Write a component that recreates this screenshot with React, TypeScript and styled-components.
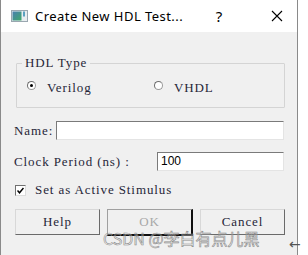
import React from "react";
import styled, { createGlobalStyle } from "styled-components";

const GlobalStyle = createGlobalStyle`
  html, body {
    margin: 0;
    padding: 0;
    background: #ffffff;
  }
  body {
    width: 308px;
    height: 255px;
    overflow: hidden;
  }
`;

const Page = styled.div`
  position: relative;
  width: 308px;
  height: 255px;
  background: #ffffff;
`;

const Window = styled.div`
  width: 296px;
  height: 255px;
  border-left: 1px solid #8a8a8a;
  border-right: 1px solid #8a8a8a;
  display: flex;
  flex-direction: column;
  box-sizing: content-box;
`;

const TitleBar = styled.div`
  height: 32px;
  background: #ffffff;
  display: flex;
  align-items: center;
  padding-left: 10px;
  font-family: "Noto Sans", "Liberation Sans", sans-serif;
  font-size: 13px;
  color: #000;
`;

const Title = styled.span`
  margin-left: 7px;
  width: 169px;
  white-space: nowrap;
  letter-spacing: 0.45px;
`;

const TitleButton = styled.span<{ $gap: number }>`
  width: 30px;
  margin-left: ${(p) => p.$gap}px;
  display: flex;
  justify-content: center;
  font-size: 15px;
`;

const Body = styled.div`
  flex: 1;
  background: #f0f0f0;
  padding: 0 12px 0 13px;
  font-family: "Liberation Serif", "DejaVu Serif", serif;
  font-size: 13px;
  letter-spacing: 0.9px;
  color: #262638;
`;

const GroupBox = styled.div`
  position: relative;
  margin: 31px 0 0 2px;
  height: 43px;
  border: 1px solid #d4d4d4;
  border-radius: 1px;
  display: flex;
  align-items: center;
  padding-left: 10px;
`;

const Legend = styled.span`
  position: absolute;
  top: -9px;
  left: 5px;
  padding: 0 3px;
  background: #f0f0f0;
`;

const RadioItem = styled.label<{ $w: number }>`
  display: flex;
  align-items: center;
  width: ${(p) => p.$w}px;
  margin-top: 4px;
`;

const RadioDot = styled.span<{ $on: boolean }>`
  width: 7px;
  height: 7px;
  border-radius: 50%;
  border: 1px solid #9a9a9a;
  border-top-color: #6e6e6e;
  border-left-color: #6e6e6e;
  background: #ffffff;
  margin: -5px 11px 0 0;
  display: flex;
  align-items: center;
  justify-content: center;
  &::after {
    content: "";
    width: 3px;
    height: 3px;
    border-radius: 50%;
    background: ${(p) => (p.$on ? "#000" : "transparent")};
  }
`;

const FieldRow = styled.div<{ $top: number }>`
  display: flex;
  align-items: center;
  margin-top: ${(p) => p.$top}px;
  height: 19px;
`;

const Label = styled.span<{ $w: number }>`
  width: ${(p) => p.$w}px;
  white-space: nowrap;
`;

const TextInput = styled.div`
  flex: 1;
  margin-right: 1px;
  height: 17px;
  background: #ffffff;
  border-top: 1px solid #7a7a7a;
  border-left: 1px solid #7a7a7a;
  border-right: 1px solid #e4e4e4;
  border-bottom: 1px solid #e4e4e4;
  font-family: "Liberation Sans", sans-serif;
  font-size: 12px;
  letter-spacing: 0;
  color: #000;
  line-height: 17px;
  padding-left: 3px;
`;

const CheckRow = styled.div`
  display: flex;
  align-items: center;
  margin-top: 11px;
  padding-left: 1px;
`;

const CheckBox = styled.span`
  width: 9px;
  height: 9px;
  background: #fff;
  border-top: 1px solid #707070;
  border-left: 1px solid #707070;
  border-right: 1px solid #dcdcdc;
  border-bottom: 1px solid #dcdcdc;
  margin-right: 9px;
  display: flex;
  align-items: center;
  justify-content: center;
`;

const ButtonRow = styled.div`
  display: flex;
  gap: 7px;
  margin-top: 11px;
  padding-left: 1px;
`;

const Button = styled.div<{ $default?: boolean; $disabled?: boolean }>`
  width: 84px;
  height: 24px;
  display: flex;
  align-items: center;
  justify-content: center;
  background: #f0f0f0;
  border-top: 1px solid ${(p) => (p.$default ? "#a0a0a0" : "#d8d8d8")};
  border-left: 1px solid ${(p) => (p.$default ? "#a0a0a0" : "#d8d8d8")};
  border-right: ${(p) => (p.$default ? "2px solid #101010" : "1px solid #6a6a6a")};
  border-bottom: ${(p) => (p.$default ? "2px solid #101010" : "1px solid #6a6a6a")};
  color: ${(p) => (p.$disabled ? "#a8a8a8" : "#262638")};
`;

const Watermark = styled.div`
  position: absolute;
  left: 103px;
  top: 226px;
  font-family: "Noto Sans CJK SC", "Noto Sans", sans-serif;
  font-size: 16px;
  color: rgba(240, 240, 240, 0.2);
  -webkit-text-stroke: 0.6px #8c8c8c;
  white-space: nowrap;
`;

const Arrow = styled.div`
  position: absolute;
  left: 289px;
  top: 236px;
  font-family: "DejaVu Sans", sans-serif;
  font-size: 14px;
  color: #555;
`;

const AppIcon = () => (
  <svg width="17" height="12" viewBox="0 0 17 12">
    <defs>
      <linearGradient id="ig" x1="0" y1="0" x2="1" y2="1">
        <stop offset="0" stopColor="#4a7fb0" />
        <stop offset="1" stopColor="#3fa86a" />
      </linearGradient>
    </defs>
    <rect x="0.5" y="0.5" width="16" height="11" fill="#e8edf0" stroke="#9aa7b0" />
    <rect x="1.5" y="1.5" width="9" height="9" fill="url(#ig)" />
    <rect x="12" y="1.5" width="2" height="5" fill="#5aa0c0" />
  </svg>
);

const CloseIcon = () => (
  <svg width="12" height="12" viewBox="0 0 12 12">
    <path d="M1 1 L11 11 M11 1 L1 11" stroke="#000" strokeWidth="1.1" fill="none" />
  </svg>
);

const CheckMark = () => (
  <svg width="7" height="7" viewBox="0 0 7 7">
    <path d="M0.5 3.5 L2.5 5.8 L6.5 1" stroke="#000" strokeWidth="1.5" fill="none" />
  </svg>
);

export default function App() {
  return (
    <Page>
      <GlobalStyle />
      <Window>
        <TitleBar>
          <AppIcon />
          <Title>Create New HDL Test...</Title>
          <TitleButton $gap={0}>?</TitleButton>
          <TitleButton $gap={28}>
            <CloseIcon />
          </TitleButton>
        </TitleBar>
        <Body>
          <GroupBox>
            <Legend>HDL Type</Legend>
            <RadioItem $w={127}>
              <RadioDot $on />
              Verilog
            </RadioItem>
            <RadioItem $w={80}>
              <RadioDot $on={false} />
              VHDL
            </RadioItem>
          </GroupBox>
          <FieldRow $top={13}>
            <Label $w={42}>Name:</Label>
            <TextInput />
          </FieldRow>
          <FieldRow $top={12}>
            <Label $w={143}>Clock Period (ns) :</Label>
            <TextInput>100</TextInput>
          </FieldRow>
          <CheckRow>
            <CheckBox>
              <CheckMark />
            </CheckBox>
            Set as Active Stimulus
          </CheckRow>
          <ButtonRow>
            <Button>Help</Button>
            <Button $default $disabled>
              OK
            </Button>
            <Button>Cancel</Button>
          </ButtonRow>
        </Body>
      </Window>
      <Watermark>CSDN @李白有点儿黑</Watermark>
      <Arrow>←</Arrow>
    </Page>
  );
}
